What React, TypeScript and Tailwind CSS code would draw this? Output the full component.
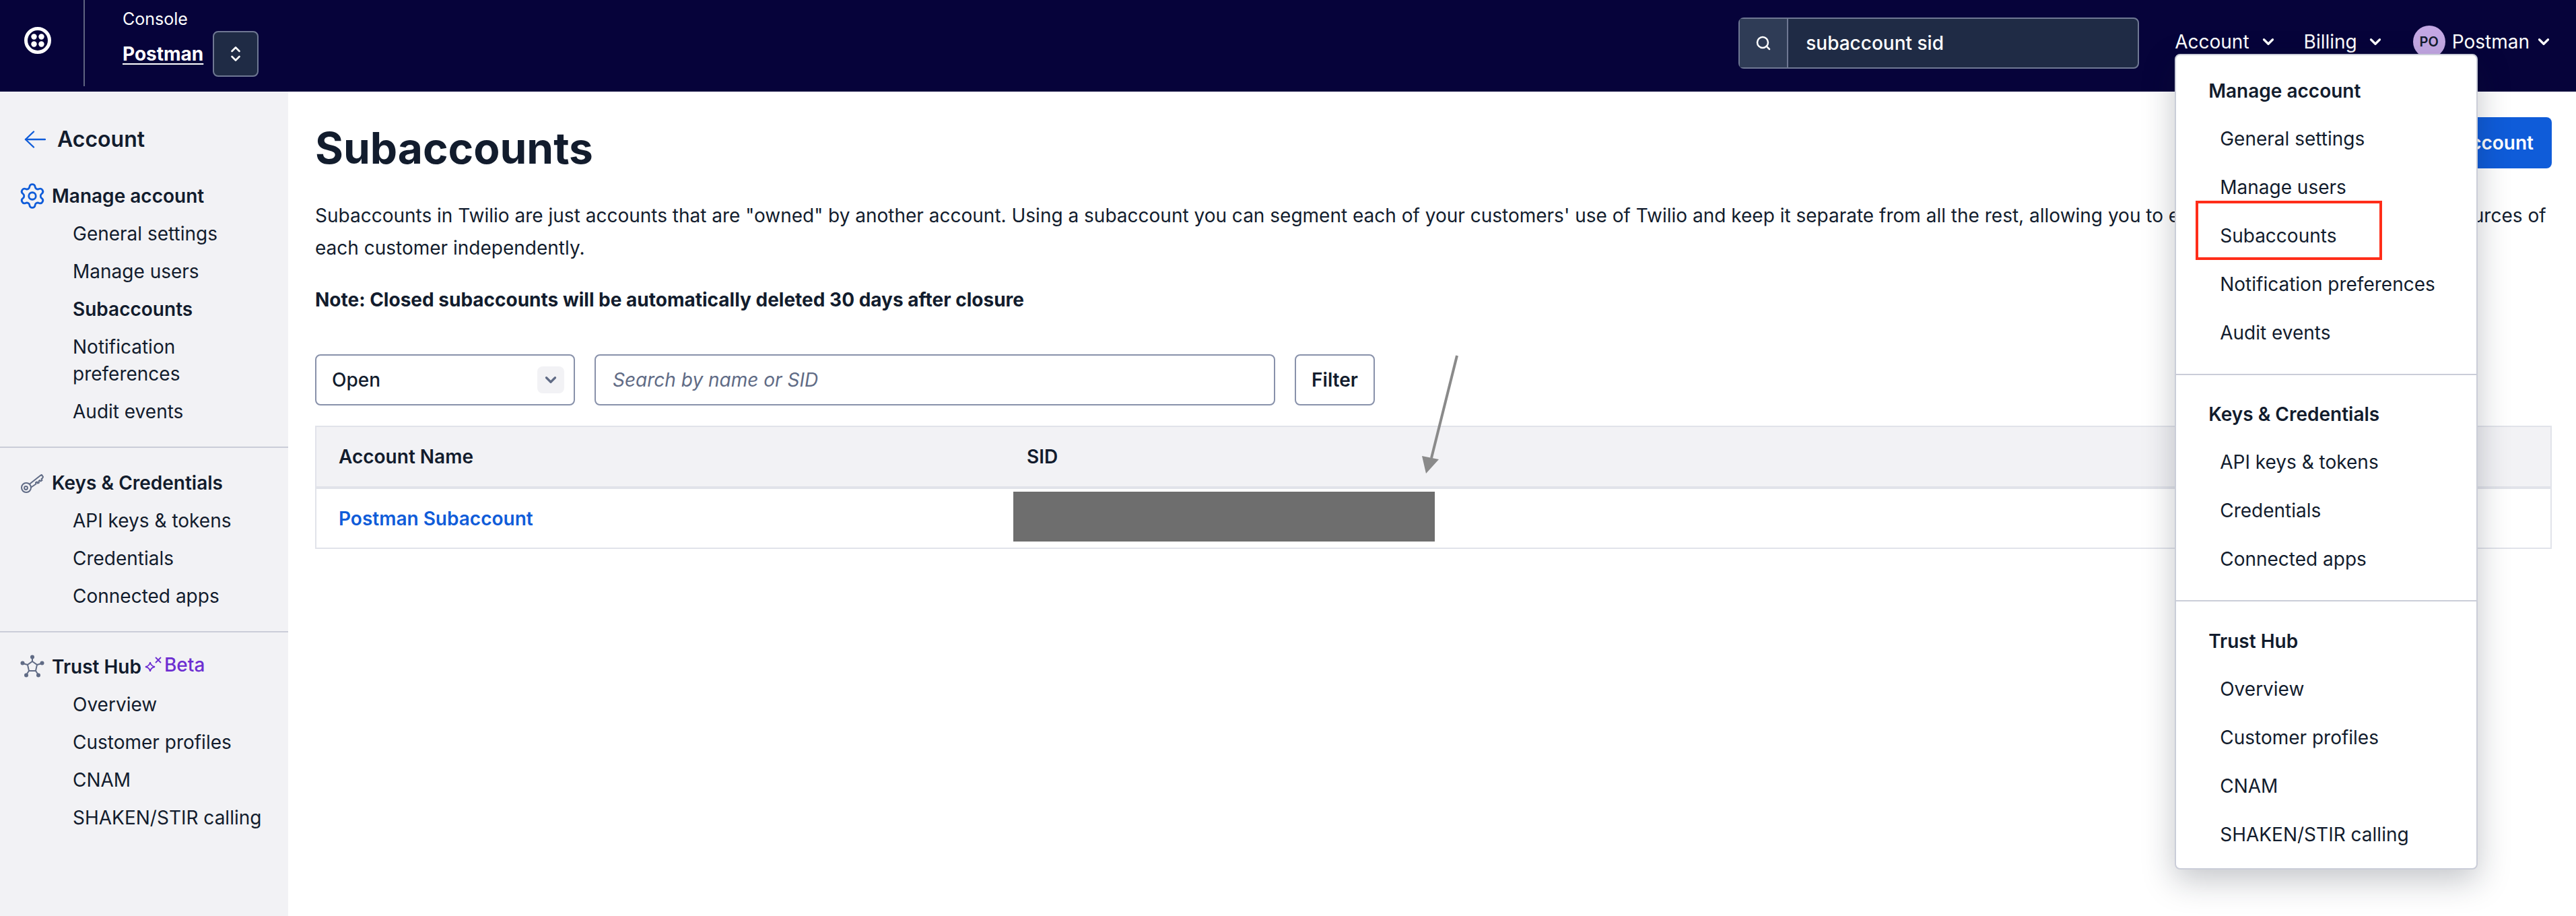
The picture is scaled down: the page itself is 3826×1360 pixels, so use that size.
import { ChevronDown, Search, Settings } from 'lucide-react';

const accountLinks = ['General settings', 'Manage users', 'Subaccounts', 'Notification preferences', 'Audit events'];
const keyLinks = ['API keys & tokens', 'Credentials', 'Connected apps'];
const trustLinks = ['Overview', 'Customer profiles', 'CNAM', 'SHAKEN/STIR calling'];

const LogoMark = () => (
  <svg width="40" height="40" viewBox="0 0 40 40" fill="none">
    <circle cx="20" cy="20" r="17.500" stroke="white" strokeWidth="5" />
    <circle cx="14.500" cy="14.500" r="4.200" fill="white" />
    <circle cx="25.500" cy="14.500" r="4.200" fill="white" />
    <circle cx="14.500" cy="25.500" r="4.200" fill="white" />
    <circle cx="25.500" cy="25.500" r="4.200" fill="white" />
  </svg>
);

const UpDown = () => (
  <svg width="16" height="24" viewBox="0 0 16 24" fill="none" stroke="white" strokeWidth="2.600" strokeLinecap="round" strokeLinejoin="round">
    <path d="M2.500 8 8 2.500 13.500 8" />
    <path d="M2.500 16 8 21.500 13.500 16" />
  </svg>
);

const BackArrow = () => (
  <svg width="32" height="26" viewBox="0 0 32 26" fill="none" stroke="#0f5cd9" strokeWidth="2.400" strokeLinecap="round" strokeLinejoin="round">
    <path d="M31 13H2" />
    <path d="M14 1.500 2 13l12 11.500" />
  </svg>
);

const KeyIcon = () => (
  <svg width="36" height="36" viewBox="0 0 36 36" fill="none" stroke="#606b85" strokeWidth="2" strokeLinejoin="round">
    <circle cx="9" cy="25" r="7" />
    <circle cx="8.500" cy="25.500" r="2.400" />
    <path d="M13.500 20 30 7l2-1 2 3-1 2-1.500 1 1 2-2 1.500-1.500-1.500-1.500 1.500 .5 2-2 1-1-2-2 1 .5 2-8 5.500" />
  </svg>
);

const TrustIcon = () => (
  <svg width="36" height="36" viewBox="0 0 36 36" fill="none" stroke="#606b85" strokeWidth="2">
    <path d="M18 10 25 15 23 24H13L11 15Z" />
    <path d="M18 4v6M11 15 4 13M25 15l7-2M13 24l-4 6M23 24l4 6" />
    <g fill="#606b85" stroke="none">
      <circle cx="18" cy="3.500" r="3" />
      <circle cx="3.500" cy="12.500" r="3" />
      <circle cx="32.500" cy="12.500" r="3" />
      <circle cx="9" cy="30.500" r="3" />
      <circle cx="27" cy="30.500" r="3" />
    </g>
  </svg>
);

const BetaSpark = () => (
  <svg width="28" height="26" viewBox="0 0 28 26" fill="none" stroke="#6d2ed1" strokeWidth="1.800">
    <path d="M10 9c.5 4 2 6 7 7-5 1-6.500 3-7 7-.5-4-2-6-7-7 5-1 6.500-3 7-7Z" />
    <path d="M18 2l8 8M26 2l-8 8" />
  </svg>
);

const SideSection = ({ icon, title, links, beta }: { icon: React.ReactNode; title: string; links: string[]; beta?: boolean }) => (
  <div>
    <div className="flex h-14 items-center">
      <span className="flex w-[77px] justify-end pr-[11px]">{icon}</span>
      <span className="font-semibold">{title}</span>
      {beta ? (
        <span className="ml-[3px] flex -translate-y-[3px] items-center font-medium text-[#6d2ed1]">
          <BetaSpark />
          <span className="ml-[3px]">Beta</span>
        </span>
      ) : null}
    </div>
    {links.map((link) => (
      <a
        key={link}
        className={`block py-2 pl-[108px] pr-4 leading-10 ${link === 'Subaccounts' ? 'font-semibold' : ''}`}
      >
        {link}
      </a>
    ))}
  </div>
);

const MenuSection = ({ title, links, className }: { title: string; links: string[]; className: string }) => (
  <div className={className}>
    <div className="flex h-[70px] items-center pl-[48px] font-semibold">{title}</div>
    {links.map((link) => (
      <a key={link} className="relative flex h-[72px] items-center pl-[65px]">
        {link}
        {link === 'Subaccounts' ? (
          <span className="absolute left-[29px] top-[-16px] h-[88px] w-[277px] border-4 border-[#ff2d19]" />
        ) : null}
      </a>
    ))}
  </div>
);

export default function App() {
  return (
    <div className="flex h-[1360px] w-[3826px] flex-col overflow-hidden bg-white font-['Inter',sans-serif] text-[28px] text-[#121c2d]">
      <header className="flex h-[136px] shrink-0 items-start bg-[#06033a] text-white">
        <div className="flex h-[128px] w-[126px] items-center justify-center border-r-2 border-[#5f6480] pb-[8px] pr-[12px]">
          <LogoMark />
        </div>
        <div className="ml-[56px] mt-[10px]">
          <div className="text-[25px] leading-[36px]">Console</div>
          <div className="flex items-center">
            <a className="font-bold leading-[40px] underline underline-offset-4">Postman</a>
            <button className="ml-[14px] flex size-[68px] items-center justify-center rounded-lg border-2 border-[#6f7893] bg-[#1f2b45]">
              <UpDown />
            </button>
          </div>
        </div>

        <div className="ml-auto mt-[26px] flex h-[76px] w-[595px] rounded-lg border-2 border-[#6f7893] bg-[#1f2b45]">
          <div className="flex w-[72px] items-center justify-center border-r-2 border-[#6f7893] bg-[#2f3c56]">
            <Search size={24} strokeWidth={2.5} />
          </div>
          <div className="flex items-center pl-[26px] font-medium">subaccount sid</div>
        </div>

        <nav className="ml-[53px] mr-[35px] mt-[38px] flex h-[48px] items-center">
          <div className="relative flex items-center">
            <span>Account</span>
            <ChevronDown size={26} strokeWidth={3} className="ml-[15px]" />
            <div className="absolute left-0 top-[39px] z-10 h-[1211px] w-[450px] rounded-lg border-2 border-[#cacdd8] bg-white text-[#121c2d] shadow-[0_16px_48px_rgba(18,28,45,0.25)]">
              <MenuSection title="Manage account" links={accountLinks} className="border-b-2 border-[#cacdd8] pb-[25px] pt-[18px]" />
              <MenuSection title="Keys & Credentials" links={keyLinks} className="border-b-2 border-[#cacdd8] pb-[25px] pt-[23px]" />
              <MenuSection title="Trust Hub" links={trustLinks} className="pt-[24px]" />
            </div>
          </div>
          <span className="ml-[40px]">Billing</span>
          <ChevronDown size={26} strokeWidth={3} className="ml-[14px]" />
          <span className="ml-[43px] flex size-[48px] items-center justify-center rounded-full bg-[#c4a8e4] text-[20px] font-semibold text-[#121c2d]">PO</span>
          <span className="ml-[10px]">Postman</span>
          <ChevronDown size={26} strokeWidth={3} className="ml-[8px]" />
        </nav>
      </header>

      <div className="flex min-h-0 flex-1">
        <aside className="w-[428px] shrink-0 bg-[#f2f2f5]">
          <div className="mt-[47px] flex h-12 items-center pl-[36px] text-[32px] font-semibold">
            <BackArrow />
            <span className="ml-[17px]">Account</span>
          </div>
          <div className="mt-[32px] border-b-2 border-[#cacdd8] pb-[24px]">
            <SideSection icon={<Settings size={42} strokeWidth={1.6} className="-mx-[3px] text-[#0f5cd9]" />} title="Manage account" links={accountLinks} />
          </div>
          <div className="border-b-2 border-[#cacdd8] pb-[24px] pt-[24px]">
            <SideSection icon={<KeyIcon />} title="Keys & Credentials" links={keyLinks} />
          </div>
          <div className="pt-[23px]">
            <SideSection icon={<TrustIcon />} title="Trust Hub" links={trustLinks} beta />
          </div>
        </aside>

        <main className="relative min-w-0 flex-1 pl-[40px] pr-[36px] pt-[38px]">
          <div className="flex items-start justify-between">
            <h1 className="mt-[6px] text-[64px] font-bold leading-[80px]">Subaccounts</h1>
            <button className="h-[76px] rounded-lg bg-[#0f5cd9] px-[27px] font-semibold text-white">Create new subaccount</button>
          </div>

          <p className="mt-[36px] leading-[48px]">
            Subaccounts in Twilio are just accounts that are "owned" by another account. Using a subaccount you can segment each of your customers' use of Twilio and keep it separate from all the rest, allowing you to easily manage the usage and resources of
            <br />
            each customer independently.
          </p>
          <p className="mt-[29px] font-bold leading-[48px]">Note: Closed subaccounts will be automatically deleted 30 days after closure</p>

          <div className="mt-[57px] flex h-[76px] gap-[29px]">
            <div className="flex w-[386px] items-center justify-between rounded-lg border-2 border-[#8891aa] pl-[23px] pr-[14px]">
              <span className="font-medium">Open</span>
              <span className="flex h-[40px] w-[40px] items-center justify-center rounded-lg bg-[#f2f2f5]">
                <ChevronDown size={26} strokeWidth={3} className="text-[#606b85]" />
              </span>
            </div>
            <div className="flex w-[1011px] items-center rounded-lg border-2 border-[#8891aa] pl-[25px] italic text-[#606b85]">Search by name or SID</div>
            <button className="w-[119px] rounded-lg border-2 border-[#8891aa] font-semibold">Filter</button>
          </div>

          <div className="mt-[30px] border-2 border-[#e1e3ea]">
            <div className="grid h-[92px] grid-cols-[1021px_1fr] items-center border-b-4 border-[#e1e3ea] bg-[#f2f2f5] pl-[33px] font-semibold">
              <span>Account Name</span>
              <span className="pl-[1px]">SID</span>
            </div>
            <div className="grid h-[87px] grid-cols-[1021px_1fr] items-center pl-[33px] font-semibold text-[#0f5cd9]">
              <a>Postman Subaccount</a>
              <span />
            </div>
          </div>

          <div className="absolute left-[1077px] top-[594px] h-[74px] w-[626px] bg-[#6e6e6e]" />
          <svg className="absolute left-[1670px] top-[390px]" width="70" height="180" viewBox="0 0 70 180" fill="none">
            <path d="M66 2 28 154" stroke="#8a8a8a" strokeWidth="4" />
            <path d="M20 177 14 151 39 156Z" fill="#8a8a8a" />
          </svg>
        </main>
      </div>
    </div>
  );
}
